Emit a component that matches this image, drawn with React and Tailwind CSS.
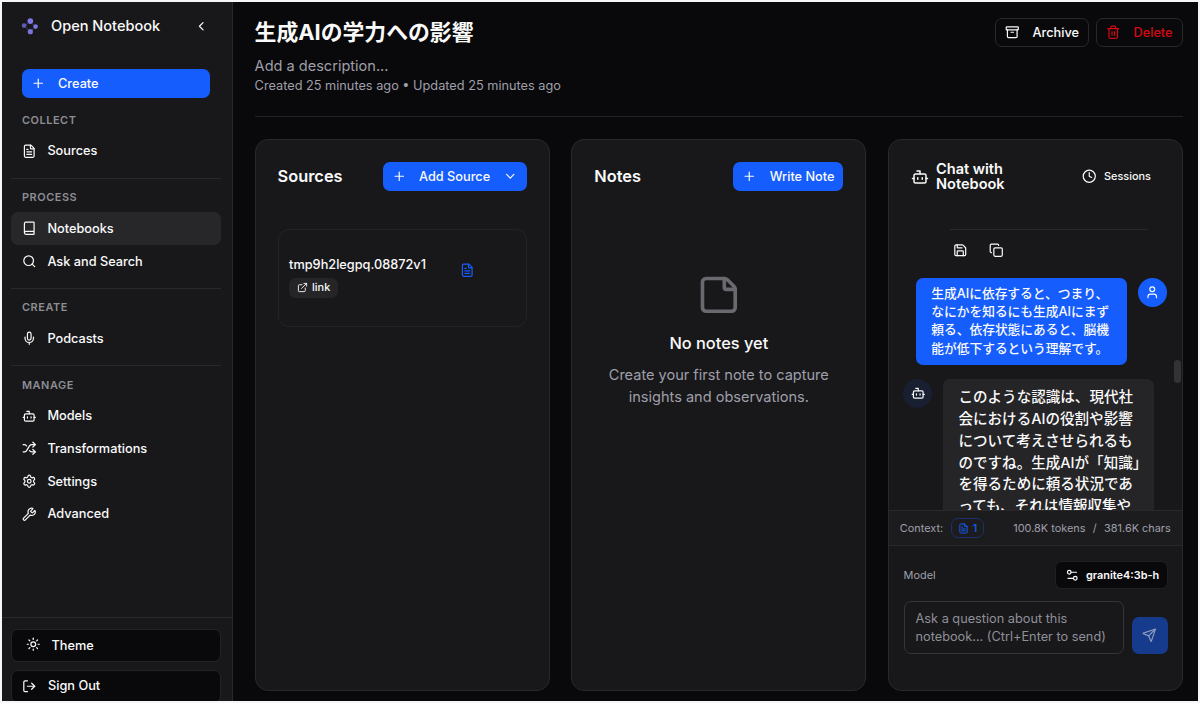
import clsx from "clsx";
import {
  Archive,
  Book,
  Bot,
  ChevronDown,
  ChevronLeft,
  Clock,
  Copy,
  ExternalLink,
  FileText,
  LogOut,
  Mic,
  Plus,
  Save,
  Search,
  Send,
  Settings,
  Settings2,
  Shuffle,
  StickyNote,
  Sun,
  Trash2,
  User,
  Wrench,
} from "lucide-react";

const navigation = [
  { title: "Collect", items: [{ name: "Sources", icon: FileText }] },
  {
    title: "Process",
    items: [
      { name: "Notebooks", icon: Book, active: true },
      { name: "Ask and Search", icon: Search },
    ],
  },
  { title: "Create", items: [{ name: "Podcasts", icon: Mic }] },
  {
    title: "Manage",
    items: [
      { name: "Models", icon: Bot },
      { name: "Transformations", icon: Shuffle },
      { name: "Settings", icon: Settings },
      { name: "Advanced", icon: Wrench },
    ],
  },
];

const Logo = () => (
  <svg width="18" height="18" viewBox="0 0 18 18">
    <path d="M9 4 4 9l5 6 5-5z" fill="none" stroke="#3c3a78" strokeWidth="1" />
    <circle cx="9.3" cy="4.1" r="2.8" fill="#7f78e6" />
    <circle cx="3.1" cy="8.6" r="2.3" fill="#6459b8" />
    <circle cx="14.6" cy="9.6" r="2.3" fill="#7a78dc" />
    <circle cx="9.3" cy="14.7" r="2.6" fill="#7a72dd" />
  </svg>
);

const Sidebar = () => (
  <aside className="flex w-[231px] shrink-0 flex-col border-r border-[#29292c] bg-[#18181a]">
    <div className="flex h-[48px] items-center pl-[19px] pr-[24px]">
      <Logo />
      <span className="ml-[12px] pt-[2px] text-[14.56px] font-medium">Open Notebook</span>
      <ChevronLeft size={14.5} className="ml-auto" />
    </div>

    <div className="flex flex-1 flex-col pl-[9px] pr-[11px] pt-[19px]">
      <button className="mx-[11px] flex h-[29px] shrink-0 items-center rounded-[7px] bg-[#155dfc] pl-[9px] text-[12.74px] font-medium">
        <Plus size={14.5} />
        <span className="ml-[12.5px] pt-px">Create</span>
      </button>

      {navigation.map((section, index) => (
        <div
          key={section.title}
          className={clsx(index === 0 ? "mt-[11px]" : "mt-[10.7px] border-t border-[#29292c] pt-[7.3px]")}
        >
          <h3 className="flex h-[22px] items-center pl-[11px] text-[10.92px] font-semibold uppercase tracking-[0.05em] text-[#8d8d94]">
            {section.title}
          </h3>
          <div className="mt-[3.7px] flex flex-col">
            {section.items.map(({ name, icon: Icon, active }) => (
              <button
                key={name}
                className={clsx(
                  "flex h-[32.7px] items-center rounded-[7px] pl-[11px] text-[12.74px] font-medium",
                  active && "bg-[#27272a]"
                )}
              >
                <Icon size={14.5} />
                <span className="ml-[10.9px]">{name}</span>
              </button>
            ))}
          </div>
        </div>
      ))}
    </div>

    <div className="flex h-[84px] shrink-0 flex-col gap-[7.5px] overflow-hidden border-t border-[#29292c] pl-[9px] pr-[11px] pt-[11px]">
      <button className="flex h-[33px] shrink-0 items-center rounded-[7px] border border-[#232326] bg-[#09090b] pl-[14px] text-[12.74px] font-medium">
        <Sun size={14.5} className="-mt-[3px]" />
        <span className="ml-[11px] pt-px">Theme</span>
      </button>
      <button className="flex h-[33px] shrink-0 items-center rounded-[7px] border border-[#232326] bg-[#09090b] pl-[10px] text-[12.74px] font-medium">
        <LogOut size={14.5} />
        <span className="ml-[11.5px]">Sign Out</span>
      </button>
    </div>
  </aside>
);

const NotebookHeader = () => (
  <header className="flex h-[115px] items-start justify-between border-b border-[#232326] pt-[16px]">
    <div>
      <h1 className="h-[29px] text-[21.84px] font-bold leading-[29px]">生成AIの学力への影響</h1>
      <p className="mt-[8px] text-[14.56px] leading-[22px] text-[#9f9fa9]">Add a description...</p>
      <p className="-mt-px text-[12.74px] leading-[19px] text-[#9f9fa9]">
        Created 25 minutes ago • Updated 25 minutes ago
      </p>
    </div>
    <div className="flex gap-[7px]">
      <button className="flex h-[29px] w-[94px] items-center rounded-[7px] border border-[#29292c] pl-[9px] text-[12.74px] font-medium">
        <Archive size={14.5} />
        <span className="ml-[13px] pt-px">Archive</span>
      </button>
      <button className="flex h-[29px] w-[87px] items-center rounded-[7px] border border-[#29292c] pl-[9px] text-[12.74px] font-medium text-[#d40912]">
        <Trash2 size={14.5} />
        <span className="ml-[13px] pt-px">Delete</span>
      </button>
    </div>
  </header>
);

const SourcesColumn = () => (
  <section className="flex flex-col rounded-[13px] border border-[#29292c] bg-[#18181a] px-[22px] pt-[22px]">
    <div className="flex h-[29px] items-center justify-between">
      <h2 className="text-[16.38px] font-semibold">Sources</h2>
      <button className="flex h-[29px] w-[144px] items-center rounded-[7px] bg-[#155dfc] pl-[9px] pr-[9px] text-[12.74px] font-medium">
        <Plus size={14.5} />
        <span className="ml-[13px]">Add Source</span>
        <ChevronDown size={14.5} className="ml-auto" />
      </button>
    </div>

    <div className="mt-[38px] flex h-[98px] items-center justify-between rounded-[11px] border border-[#232326] pl-[10.5px] pr-[51px]">
      <div className="-mt-[3px]">
        <h4 className="text-[12.74px] font-medium leading-[18px]">tmp9h2legpq.08872v1</h4>
        <span className="mt-[4px] flex h-[20px] w-[49px] items-center gap-[4px] rounded-[7px] bg-[#252528] pl-[8px] text-[10.92px] font-medium">
          <ExternalLink size={11} />
          link
        </span>
      </div>
      <FileText size={14.5} className="-mt-[16px] text-[#155dfc]" />
    </div>
  </section>
);

const NotesColumn = () => (
  <section className="flex flex-col rounded-[13px] border border-[#29292c] bg-[#18181a] px-[22px] pt-[22px]">
    <div className="flex h-[29px] items-center justify-between">
      <h2 className="text-[16.38px] font-semibold">Notes</h2>
      <button className="flex h-[29px] w-[110px] items-center rounded-[7px] bg-[#155dfc] pl-[9px] text-[12.74px] font-medium">
        <Plus size={14.5} />
        <span className="ml-[13px]">Write Note</span>
      </button>
    </div>

    <div className="mt-[82px] flex flex-col items-center text-center">
      <StickyNote size={43.7} className="text-[#9f9fa9] opacity-60" />
      <h3 className="mt-[14px] text-[16.38px] font-medium leading-[25px]">No notes yet</h3>
      <p className="mt-[9.5px] w-[240px] text-[14.56px] leading-[21.8px] text-[#9f9fa9]">
        Create your first note to capture insights and observations.
      </p>
    </div>
  </section>
);

const ChatMessages = () => (
  <div className="relative flex-1 overflow-hidden pt-[26px]">
    <div className="ml-[61px] flex w-[198px] gap-[22px] border-t border-[#29292c] pl-[2.6px] pt-[13px]">
      <Save size={14.5} />
      <Copy size={14.5} />
    </div>

    <div className="mt-[20px] flex justify-end gap-[11px] pr-[14.8px]">
      <div className="h-[87px] w-[211px] rounded-[7px] bg-[#155dfc] px-[15px] py-[7.5px] text-[12.74px] font-medium leading-[18.2px]">
        生成AIに依存すると、つまり、
        <br />
        なにかを知るにも生成AIにまず
        <br />
        頼る、依存状態にあると、脳機
        <br />
        能が低下するという理解です。
      </div>
      <div className="flex size-[29px] items-center justify-center rounded-full bg-[#155dfc]">
        <User size={14.5} />
      </div>
    </div>

    <div className="mt-[14.5px] flex gap-[11px] pl-[14.4px]">
      <div className="flex size-[29px] shrink-0 items-center justify-center rounded-full bg-[#181f31]">
        <Bot size={14.5} />
      </div>
      <div className="w-[211px] shrink-0 whitespace-nowrap rounded-[7px] bg-[#252528] px-[15px] pt-[8px] text-[14.56px] font-medium leading-[21.84px]">
        このような認識は、現代社
        <br />
        会におけるAIの役割や影響
        <br />
        について考えさせられるも
        <br />
        のですね。生成AIが「知識」
        <br />
        を得るために頼る状況であ
        <br />
        っても、それは情報収集や
      </div>
    </div>

    {/* scrollbar thumb */}
    <div className="absolute right-[1px] top-[157px] h-[23px] w-[7px] rounded-full bg-[#333336]" />
  </div>
);

const ChatColumn = () => (
  <section className="flex min-w-0 flex-col overflow-hidden rounded-[13px] border border-[#29292c] bg-[#18181a]">
    <div className="mt-[22px] flex h-[41px] items-start justify-between pl-[22px] pr-[31px]">
      <div className="flex h-[29px] items-center gap-[7px]">
        <Bot size={18} />
        <h2 className="w-[90px] pt-px text-[14.56px] font-semibold leading-[14.56px]">Chat with Notebook</h2>
      </div>
      <button className="flex h-[29px] items-center gap-[7.5px] text-[10.92px] font-medium">
        <Clock size={14.5} />
        Sessions
      </button>
    </div>

    <ChatMessages />

    <div className="flex h-[36px] shrink-0 items-center justify-between border-y border-[#29292c] bg-[#1c1c1f] pl-[10.7px] pr-[11.3px] text-[10.92px] text-[#9f9fa9]">
      <div className="flex items-center gap-[7.6px]">
        <span>Context:</span>
        <span className="flex h-[20px] w-[33px] items-center gap-[4px] rounded-[7px] border border-[#193069] pl-[6px] font-medium text-[#155dfc]">
          <FileText size={11} />1
        </span>
      </div>
      <div className="flex gap-[7.3px]">
        <span>100.8K tokens</span>
        <span>/</span>
        <span>381.6K chars</span>
      </div>
    </div>

    <div className="h-[144px] shrink-0 px-[14.5px] pt-[15px]">
      <div className="flex h-[28px] items-center justify-between">
        <span className="text-[10.92px] text-[#9f9fa9]">Model</span>
        <button className="flex h-[28px] w-[113px] items-center gap-[7px] rounded-[7px] border border-[#202023] bg-[#09090b] pl-[9px] text-[10.92px] font-semibold">
          <Settings2 size={14.5} />
          granite4:3b-h
        </button>
      </div>
      <div className="mt-[12px] flex items-end justify-between">
        <div className="h-[53px] w-[220px] rounded-[7px] border border-[#353538] px-[11px] pt-[8px] text-[12.74px] leading-[18.2px] text-[#8f8f98]">
          Ask a question about this notebook... (Ctrl+Enter to send)
        </div>
        <button className="flex h-[37px] w-[36px] items-center justify-center rounded-[7px] bg-[#173b8c] text-[#8e9bbf]">
          <Send size={14.5} />
        </button>
      </div>
    </div>
  </section>
);

export default function App() {
  return (
    <div className="h-[703px] w-[1200px] overflow-hidden bg-[#f4f6f8] p-[2px] font-['Inter','Noto_Sans_CJK_JP',sans-serif] text-[#fafafa]">
      <div className="flex h-[699px] w-[1196px] overflow-hidden bg-[#09090b]">
        <Sidebar />
        <main className="flex min-w-0 flex-1 flex-col pl-[21.6px] pr-[15px]">
          <NotebookHeader />
          <div className="mt-[22px] grid h-[552px] grid-cols-3 gap-[21.8px]">
            <SourcesColumn />
            <NotesColumn />
            <ChatColumn />
          </div>
        </main>
      </div>
    </div>
  );
}
